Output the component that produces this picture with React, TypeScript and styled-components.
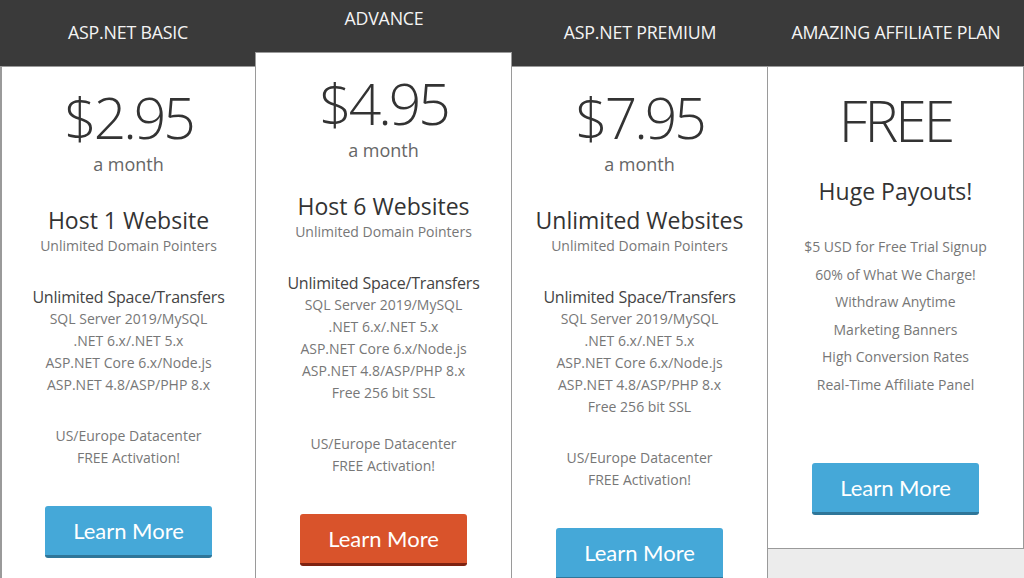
import React from "react";
import styled, { createGlobalStyle, css } from "styled-components";

const Global = createGlobalStyle`
  html, body { margin: 0; padding: 0; background: #ececec; }
  body { font-family: "Open Sans", "Noto Sans", sans-serif; }
`;

const Page = styled.div`
  width: 1024px;
  height: 578px;
  overflow: hidden;
  display: grid;
  grid-template-columns: repeat(4, 256px);
  align-items: start;
`;

const Column = styled.div`
  display: flex;
  flex-direction: column;
`;

const Header = styled.div<{ $featured?: boolean }>`
  background: #3a3a3a;
  height: ${(p) => (p.$featured ? 52 : 66)}px;
  box-sizing: border-box;
  padding-top: ${(p) => (p.$featured ? 6 : 20)}px;
  text-align: center;
  color: #f4f4f4;
  font-size: 17.8px;
  letter-spacing: -0.2px;
  line-height: 24px;
  white-space: nowrap;
`;

const Card = styled.div<{ $height: number; $first?: boolean }>`
  background: #fff;
  height: ${(p) => p.$height}px;
  box-sizing: border-box;
  border: 1px solid #9a9a9a;
  border-left-width: ${(p) => (p.$first ? 2 : 1)}px;
  margin-left: ${(p) => (p.$first ? 0 : -1)}px;
  display: flex;
  flex-direction: column;
  align-items: center;
  text-align: center;
  padding-top: 11px;
`;

const Price = styled.div<{ $offset?: number }>`
  font-weight: 300;
  font-size: 57px;
  line-height: 78px;
  letter-spacing: -3px;
  color: #333;
  margin-top: ${(p) => p.$offset ?? 0}px;
`;

const Period = styled.div`
  font-size: 18px;
  line-height: 16px;
  color: #666;
`;

const Title = styled.div<{ $gap: number }>`
  font-size: 23px;
  line-height: 31px;
  color: #333;
  margin-top: ${(p) => p.$gap}px;
`;

const Sub = styled.div`
  font-size: 14px;
  line-height: 20px;
  color: #777;
`;

const FeatureHead = styled.div`
  font-size: 16px;
  line-height: 22px;
  color: #444;
  letter-spacing: -0.2px;
  margin-top: 30px;
`;

const List = styled.ul<{ $spacing: number; $gap?: number }>`
  list-style: none;
  margin: ${(p) => p.$gap ?? 0}px 0 0;
  padding: 0;
  font-size: 14px;
  line-height: ${(p) => p.$spacing}px;
  color: #777;
  white-space: nowrap;
`;

const Spacer = styled.div<{ $h: number }>`
  height: ${(p) => p.$h}px;
  flex: none;
`;

const Button = styled.a<{ $variant?: "orange" }>`
  display: flex;
  align-items: center;
  justify-content: center;
  width: 167px;
  height: 52px;
  box-sizing: border-box;
  border-radius: 3px;
  font-family: "Lato", "Open Sans", sans-serif;
  font-size: 22px;
  color: #fff;
  text-decoration: none;
  ${(p) =>
    p.$variant === "orange"
      ? css`
          background: #d9532b;
          border-bottom: 3px solid #7e2210;
        `
      : css`
          background: #45a8d8;
          border-bottom: 3px solid #2f7699;
        `}
`;

type Plan = {
  name: string;
  featured?: boolean;
  price: string;
  title: string;
  extra: string[];
};

const baseList = [
  "SQL Server 2019/MySQL",
  ".NET 6.x/.NET 5.x",
  "ASP.NET Core 6.x/Node.js",
  "ASP.NET 4.8/ASP/PHP 8.x",
];

const plans: Plan[] = [
  { name: "ASP.NET BASIC", price: "$2.95", title: "Host 1 Website", extra: baseList },
  {
    name: "ADVANCE",
    featured: true,
    price: "$4.95",
    title: "Host 6 Websites",
    extra: [...baseList, "Free 256 bit SSL"],
  },
  {
    name: "ASP.NET PREMIUM",
    price: "$7.95",
    title: "Unlimited Websites",
    extra: [...baseList, "Free 256 bit SSL"],
  },
];

const affiliate = [
  "$5 USD for Free Trial Signup",
  "60% of What We Charge!",
  "Withdraw Anytime",
  "Marketing Banners",
  "High Conversion Rates",
  "Real-Time Affiliate Panel",
];

export default function App() {
  return (
    <>
      <Global />
      <Page>
        {plans.map((p, i) => (
          <Column key={p.name}>
            <Header $featured={p.featured}>{p.name}</Header>
            <Card $height={600} $first={i === 0}>
              <Price>{p.price}</Price>
              <Period>a month</Period>
              <Title $gap={33}>{p.title}</Title>
              <Sub>Unlimited Domain Pointers</Sub>
              <FeatureHead>Unlimited Space/Transfers</FeatureHead>
              <List $spacing={22}>
                {p.extra.map((f) => (
                  <li key={f}>{f}</li>
                ))}
              </List>
              <List $spacing={22} $gap={29}>
                <li>US/Europe Datacenter</li>
                <li>FREE Activation!</li>
              </List>
              <Spacer $h={37} />
              <Button $variant={p.featured ? "orange" : undefined} href="#">
                Learn More
              </Button>
            </Card>
          </Column>
        ))}
        <Column>
          <Header>AMAZING AFFILIATE PLAN</Header>
          <Card $height={483}>
            <Price $offset={3}>FREE</Price>
            <Title $gap={17}>Huge Payouts!</Title>
            <List $spacing={27.6} $gap={26}>
              {affiliate.map((f) => (
                <li key={f}>{f}</li>
              ))}
            </List>
            <Spacer $h={64} />
            <Button href="#">Learn More</Button>
          </Card>
        </Column>
      </Page>
    </>
  );
}
